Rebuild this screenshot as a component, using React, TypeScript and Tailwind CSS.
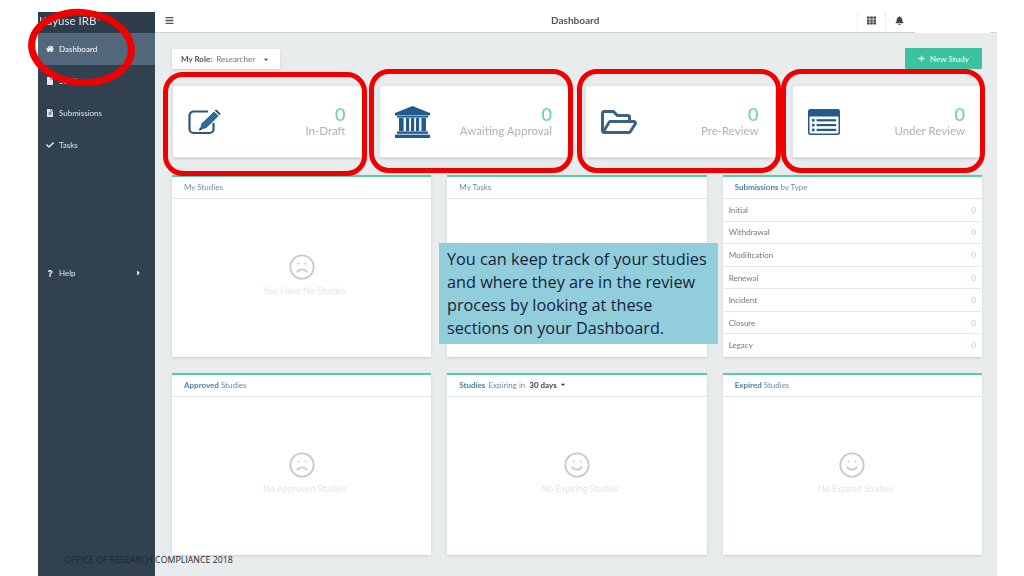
import React from "react";
import { Frown, Smile } from "lucide-react";
import {
  FaBars,
  FaBell,
  FaCaretDown,
  FaCaretRight,
  FaCheck,
  FaFile,
  FaFileAlt,
  FaHome,
  FaPlus,
  FaQuestion,
  FaRegFolderOpen,
  FaTh,
} from "react-icons/fa";

function EditIcon() {
  return (
    <svg viewBox="0 0 33 26" className="h-[26px] w-[33px]" fill="none">
      <path
        d="M20 2.5H5.5A4 4 0 0 0 1.5 6.5v13.5A4 4 0 0 0 5.5 24h16a4 4 0 0 0 4-4v-6"
        stroke="#2f5675"
        strokeWidth="2.2"
      />
      <path d="M11 21.5 13 14.5 26 2l5.2 5L18.2 19.6z" fill="#2d6a9f" stroke="#ffffff" strokeWidth="1" />
      <path d="M11 21.5 11.8 18.6 14 20.8z" fill="#16324a" />
      <path d="M26.6 1.6 28.4.4 32.6 4.4 31.6 6.4z" fill="#2f5675" />
    </svg>
  );
}

function BankIcon() {
  return (
    <svg viewBox="0 0 35 32" className="h-[32px] w-[35px]" fill="#235a8c">
      <path d="M17.5 0 35 7v2.4H0V7z" />
      <rect x="2" y="10" width="31" height="1.6" />
      <rect x="4" y="12" width="4.6" height="13" />
      <rect x="11" y="12" width="3.2" height="13" />
      <rect x="16" y="12" width="3.2" height="13" />
      <rect x="21" y="12" width="3.2" height="13" />
      <rect x="26.4" y="12" width="4.6" height="13" />
      <rect x="2" y="25.4" width="31" height="2.4" />
      <rect x="0" y="28.6" width="35" height="3.4" />
    </svg>
  );
}

function FolderIcon() {
  return <FaRegFolderOpen className="h-[32px] w-[36px] text-[#3a6186]" />;
}

function ListIcon() {
  return (
    <svg viewBox="0 0 32 26" className="h-[26px] w-[32px]">
      <rect width="32" height="26" rx="2.5" fill="#235a8c" />
      <rect x="1.5" y="7.5" width="29" height="17" rx="1" fill="#ffffff" />
      <g fill="#235a8c">
        <rect x="4" y="10" width="2.6" height="2.6" />
        <rect x="4" y="14.8" width="2.6" height="2.6" />
        <rect x="4" y="19.6" width="2.6" height="2.6" />
        <rect x="8.6" y="10.2" width="19.6" height="2.2" />
        <rect x="8.6" y="15" width="19.6" height="2.2" />
        <rect x="8.6" y="19.8" width="19.6" height="2.2" />
      </g>
    </svg>
  );
}

const navItems = [
  { label: "Dashboard", icon: FaHome, active: true },
  { label: "Studies", icon: FaFile },
  { label: "Submissions", icon: FaFileAlt },
  { label: "Tasks", icon: FaCheck },
];

const stats = [
  { label: "In-Draft", icon: <EditIcon /> },
  { label: "Awaiting Approval", icon: <BankIcon /> },
  { label: "Pre-Review", icon: <FolderIcon /> },
  { label: "Under Review", icon: <ListIcon /> },
];

const submissionTypes = ["Initial", "Withdrawal", "Modification", "Renewal", "Incident", "Closure", "Legacy"];

function Sidebar() {
  return (
    <aside className="flex w-[117px] shrink-0 flex-col bg-[#31414f] text-[#dfe5e9]">
      <div className="flex h-[21px] items-center bg-[#2c3c4b] pb-[3px] pl-[1px] text-[11.5px] text-[#dfe5e9]">
        Kayuse IRB<span className="mb-[6px] text-[7px] text-[#e08a3c]">®</span>
      </div>
      {navItems.map((item) => (
        <div
          key={item.label}
          className={`flex h-[32px] items-center gap-[5px] pl-[8px] text-[8px] ${item.active ? "bg-[#52677a] text-white" : ""}`}
        >
          <item.icon className="h-[8px] w-[8px] shrink-0" />
          {item.label}
        </div>
      ))}
      <div className="mt-[96px] flex h-[32px] items-center gap-[5px] pl-[8px] pr-[14px] text-[8px]">
        <FaQuestion className="h-[7px] w-[8px] shrink-0" />
        Help
        <FaCaretRight className="ml-auto h-[8px] w-[5px]" />
      </div>
    </aside>
  );
}

function Topbar() {
  return (
    <header className="flex h-[21px] shrink-0 bg-white text-[#333]">
      <div className="flex flex-1 items-center border-b border-[#cfd3d3] pl-[10px]">
        <FaBars className="mb-[3px] h-[9px] w-[9px] text-[#555]" />
        <span className="mb-[3px] ml-[377px] text-[10px] font-bold text-[#555]">Dashboard</span>
        <div className="ml-auto mr-[3px] flex h-full">
          <div className="flex w-[28px] items-center justify-center border-l border-[#eeeeee] pb-[3px]">
            <FaTh className="h-[9px] w-[9px] text-[#444]" />
          </div>
          <div className="flex w-[27px] items-center justify-center border-l border-[#eeeeee] pb-[3px]">
            <FaBell className="h-[9px] w-[9px] text-[#444]" />
          </div>
        </div>
      </div>
      <div className="w-[75px]" />
      <div className="w-[7px] border-b border-[#cfd3d3]" />
    </header>
  );
}

function StatCard({ label, icon }: { label: string; icon: React.ReactNode }) {
  return (
    <div className="flex h-[73px] items-center justify-between rounded-[2px] border border-[#e2e5e5] bg-white pl-[15px] pr-[16px] shadow-sm">
      {icon}
      <div className="text-right">
        <div className="text-[18px] font-medium leading-[18px] text-[#6fcfb4]">0</div>
        <div className="text-[11.5px] leading-[16px] text-[#aeb2b2]">{label}</div>
      </div>
    </div>
  );
}

function Panel({ title, children }: { title: React.ReactNode; children: React.ReactNode }) {
  return (
    <section className="flex h-[182px] flex-col border-t-2 border-[#5cc9a7] bg-white shadow-sm">
      <div className="flex h-[22px] shrink-0 items-center border-b border-[#e4e7e7] pb-[2px] pl-[12px] text-[8px] text-[#6d8ba6]">
        {title}
      </div>
      {children}
    </section>
  );
}

function EmptyState({ text, happy }: { text: string; happy?: boolean }) {
  const Icon = happy ? Smile : Frown;
  return (
    <div className="flex flex-1 flex-col items-center pt-[54px]">
      <Icon className="h-[28px] w-[28px] text-[#c8caca]" strokeWidth={1.6} />
      <div className="ml-[6px] mt-[3px] text-[9px] text-[#e2e4e4]">{text}</div>
    </div>
  );
}

function SubmissionsList() {
  return (
    <div className="flex flex-1 flex-col pb-[1px]">
      {submissionTypes.map((type, i) => (
        <div
          key={type}
          className={`flex flex-1 items-center justify-between pl-[6px] pr-[6px] text-[8px] text-[#777] ${i < submissionTypes.length - 1 ? "border-b border-[#e6e8e8]" : ""}`}
        >
          {type}
          <span className="text-[#a5d6c7]">0</span>
        </div>
      ))}
    </div>
  );
}

export default function App() {
  return (
    <div className="relative h-[576px] w-[1024px] overflow-hidden bg-white font-['Lato',sans-serif]">
      <div className="ml-[38px] flex h-full w-[959px] pt-[12px] blur-[0.3px]">
        <Sidebar />
        <div className="flex min-w-0 flex-1 flex-col bg-[#e8ecec]">
          <Topbar />
          <main className="flex flex-col pl-[17px] pr-[15px] pt-[15px]">
            <div className="flex h-[21px] items-start justify-between">
              <div className="mt-[1px] flex h-[20px] w-[108px] items-center bg-white pl-[9px] text-[8px] text-[#777] shadow-sm">
                <b className="mr-[4px] text-[#555]">My Role:</b> Researcher
                <FaCaretDown className="ml-[8px] h-[7px] w-[6px] text-[#444]" />
              </div>
              <button className="flex h-[21px] w-[77px] items-center justify-center gap-[5px] rounded-[1px] bg-[#3cc2a0] text-[8px] font-bold text-[#d9f5ec]">
                <FaPlus className="h-[7px] w-[7px]" /> New Study
              </button>
            </div>
            <div className="mt-[16px] grid grid-cols-4 gap-[16px]">
              {stats.map((s) => (
                <StatCard key={s.label} label={s.label} icon={s.icon} />
              ))}
            </div>
            <div className="mt-[17px] grid grid-cols-3 gap-[16px]">
              <Panel title="My Studies">
                <EmptyState text="You Have No Studies" />
              </Panel>
              <Panel title="My Tasks">
                <div className="flex-1" />
              </Panel>
              <Panel
                title={
                  <span>
                    <b className="text-[#4f7fae]">Submissions</b> by Type
                  </span>
                }
              >
                <SubmissionsList />
              </Panel>
              <Panel
                title={
                  <span>
                    <b className="text-[#4f7fa0]">Approved</b> Studies
                  </span>
                }
              >
                <EmptyState text="No Approved Studies" />
              </Panel>
              <Panel
                title={
                  <span className="flex items-center">
                    <b className="mr-[3px] text-[#4f7fa0]">Studies</b> Expiring in
                    <b className="ml-[4px] text-[#444]">30 days</b>
                    <FaCaretDown className="ml-[3px] h-[7px] w-[6px] text-[#333]" />
                  </span>
                }
              >
                <EmptyState text="No Expiring Studies" happy />
              </Panel>
              <Panel
                title={
                  <span>
                    <b className="text-[#4f7fa0]">Expired</b> Studies
                  </span>
                }
              >
                <EmptyState text="No Expired Studies" happy />
              </Panel>
            </div>
          </main>
        </div>
      </div>

      {/* slide annotations on top of the screenshot */}
      <div className="absolute left-[28px] top-[9px] h-[77px] w-[107px] rotate-[5deg] rounded-[50%] border-[7px] border-[#f00000]" />
      <div className="absolute left-[163px] top-[72px] h-[104px] w-[204px] rounded-[20px] border-[5px] border-[#f00000]" />
      <div className="absolute left-[369px] top-[69px] h-[104px] w-[204px] rounded-[20px] border-[5px] border-[#f00000]" />
      <div className="absolute left-[577px] top-[69px] h-[104px] w-[204px] rounded-[20px] border-[5px] border-[#f00000]" />
      <div className="absolute left-[781px] top-[69px] h-[104px] w-[204px] rounded-[20px] border-[5px] border-[#f00000]" />

      <div className="absolute left-[439px] top-[243px] h-[101px] w-[279px] bg-[#92cddc] pl-[8px] pt-[5px] font-['Open_Sans',sans-serif] text-[16.25px] leading-[23px] text-[#13243a]">
        You can keep track of your studies
        <br />
        and where they are in the review
        <br />
        process by looking at these
        <br />
        sections on your Dashboard.
      </div>

      <div className="absolute left-[65px] top-[553px] font-['Open_Sans',sans-serif] text-[8.8px] leading-[14px] text-[#1c2830]">
        OFFICE OF RESEARCH COMPLIANCE 2018
      </div>
    </div>
  );
}
